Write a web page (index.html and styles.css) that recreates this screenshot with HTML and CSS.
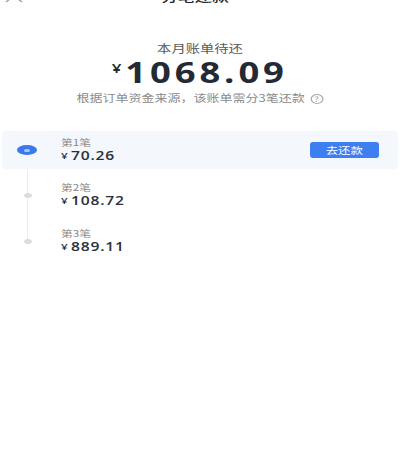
FILE: index.html
```html
<!DOCTYPE html>
<html lang="zh">
<head>
<meta charset="utf-8">
<link rel="stylesheet" href="styles.css">
</head>
<body>
<div class="page">
  <header class="header">
    <svg class="close" width="20" height="14" viewBox="0 0 20 14"><path d="M2 1 L18 13 M18 1 L2 13" stroke="#9a9a9a" stroke-width="1.3" fill="none"/></svg>
    <div class="title"><span class="wide">分笔还款</span></div>
    <div class="more"><i></i><i></i><i></i></div>
  </header>

  <section class="summary">
    <div class="label"><span class="wide">本月账单待还</span></div>
    <div class="amount"><span class="wide"><span class="yen">¥</span>1068.09</span></div>
    <div class="note"><span class="wide">根据订单资金来源，该账单需分3笔还款<span class="qmark">?</span></span></div>
  </section>

  <section class="card">
    <div class="rail"><span class="bluedot"><span></span></span></div>
    <div class="info">
      <div class="nth"><span class="wide">第1笔</span></div>
      <div class="sum"><span class="wide"><span class="yen-s">¥</span>70.26</span></div>
    </div>
    <button class="pay"><span class="wide">去还款</span></button>
  </section>

  <section class="steps">
    <div class="step first">
      <div class="rail"><span class="graydot"></span></div>
      <div class="info">
        <div class="nth"><span class="wide">第2笔</span></div>
        <div class="sum"><span class="wide"><span class="yen-s">¥</span>108.72</span></div>
      </div>
    </div>
    <div class="step last">
      <div class="rail"><span class="graydot"></span></div>
      <div class="info">
        <div class="nth"><span class="wide">第3笔</span></div>
        <div class="sum"><span class="wide"><span class="yen-s">¥</span>889.11</span></div>
      </div>
    </div>
  </section>
</div>
</body>
</html>
```

FILE: styles.css
```css
* { box-sizing: border-box; }
html, body { margin: 0; padding: 0; background: #fff; }
body {
  font-family: "Noto Sans CJK SC", "Noto Sans", sans-serif;
  color: #222;
  overflow: hidden;
}
.page { width: 400px; height: 471px; overflow: hidden; }

.wide { display: inline-block; transform: scaleX(1.3); transform-origin: center; white-space: nowrap; }

.header {
  display: flex;
  align-items: center;
  justify-content: space-between;
  height: 24px;
  margin-top: -16px;
  padding: 0 4px 0 4px;
}
.close { display: block; }
.title { font-size: 13px; color: #2a2a2a; font-weight: 500; line-height: 24px; }
.more { display: flex; gap: 5px; padding-right: 4px; }
.more i { display: block; width: 5px; height: 4px; border-radius: 50%; background: #c8c8c8; }

.summary { display: flex; flex-direction: column; align-items: center; margin-top: 33px; }
.label { font-size: 11px; color: #5a5a5a; line-height: 14px; }
.amount {
  margin-top: 0;
  font-family: "Open Sans", "Noto Sans", sans-serif;
  font-weight: 700;
  font-size: 28px;
  line-height: 26px;
  color: #232a35;
  letter-spacing: 3px;
}
.yen { font-size: 13px; vertical-align: 10px; margin-right: 3px; font-weight: 600; letter-spacing: 0; }
.note { margin-top: 6px; font-size: 10px; color: #8a8a8a; line-height: 14px; }
.qmark {
  display: inline-block;
  width: 10px; height: 10px;
  margin-left: 4px;
  border: 1px solid #aaa;
  border-radius: 50%;
  font-size: 7px;
  line-height: 8px;
  text-align: center;
  color: #999;
  vertical-align: 0px;
}

.card {
  display: flex;
  align-items: center;
  height: 38px;
  margin: 26px 2px 0 2px;
  background: #f4f7fb;
  border-radius: 4px;
  padding-right: 19px;
}
.rail { width: 59px; flex: none; display: flex; justify-content: center; padding-right: 8px; }
.card .rail { padding-right: 9px; }
.bluedot {
  display: flex; align-items: center; justify-content: center;
  width: 20px; height: 10px; border-radius: 50%;
  background: #3a78ec;
}
.bluedot span { display: block; width: 6px; height: 3px; border-radius: 50%; background: #a9c6ff; }

.info { flex: 1; display: flex; flex-direction: column; align-items: flex-start; }
.info .wide { transform-origin: left center; }
.nth { font-size: 9px; color: #888; line-height: 12px; }
.sum {
  font-family: "Open Sans", "Noto Sans", sans-serif;
  font-size: 12px; font-weight: 600; color: #2a303a; line-height: 14px;
  letter-spacing: 0.6px;
}
.yen-s { font-size: 9px; vertical-align: 1px; margin-right: 2px; }

.pay {
  width: 69px; height: 16px;
  border: none; border-radius: 3px;
  background: #3d7ef0;
  color: #fff;
  font-family: "Noto Sans CJK SC", sans-serif;
  font-size: 9.5px; line-height: 16px;
  padding: 0;
}

.steps { display: flex; flex-direction: column; }
.step {
  display: flex;
  align-items: center;
  height: 46px;
  background: linear-gradient(#ececec, #ececec) no-repeat 27px 0 / 1px 100%;
}
.step.first { height: 49px; padding-top: 3px; }
.step.last { background-size: 1px 50%; }
.step .rail { padding-right: 0; justify-content: flex-start; padding-left: 24px; }
.graydot { display: block; width: 8px; height: 5px; border-radius: 50%; background: #dcdcdc; }
.step .info { padding-left: 2px; }
```
